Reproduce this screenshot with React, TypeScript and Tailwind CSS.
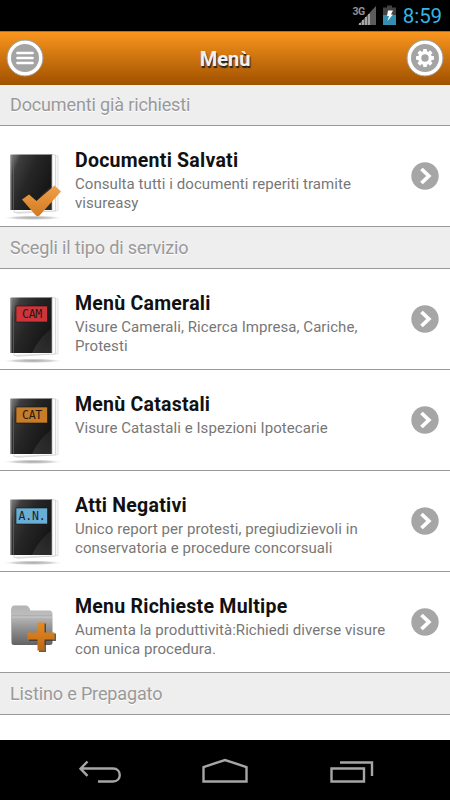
import type { ReactNode } from "react"

const Book = ({ id, children }: { id: string, children?: ReactNode }) => (
  <svg width="70" height="80" viewBox="0 0 70 80" className="block">
    <defs>
      <linearGradient id={`${id}-cover`} x1="0" y1="0" x2="1" y2="0.6">
        <stop offset="0" stopColor="#8a8a8a" />
        <stop offset="0.2" stopColor="#3d3d3d" />
        <stop offset="0.5" stopColor="#262626" />
        <stop offset="1" stopColor="#141414" />
      </linearGradient>
      <linearGradient id={`${id}-shine`} x1="0" y1="0" x2="0" y2="1">
        <stop offset="0" stopColor="#fff" stopOpacity="0" />
        <stop offset="1" stopColor="#fff" stopOpacity="0.26" />
      </linearGradient>
      <radialGradient id={`${id}-shadow`}>
        <stop offset="0" stopColor="#a8a8a8" />
        <stop offset="0.6" stopColor="#d2d2d2" />
        <stop offset="1" stopColor="#fff" stopOpacity="0" />
      </radialGradient>
    </defs>
    <ellipse cx="33" cy="72.8" rx="31" ry="2.4" fill={`url(#${id}-shadow)`} />
    <path d="M51 10L58 11V65.5L17 68.5V66L51 65z" fill="#f7f7f7" stroke="#dcdcdc" strokeWidth="0.8" />
    <path d="M51 9.5L55.5 10V66L14 67.5V65z" fill="#fcfcfc" stroke="#c9c9c9" strokeWidth="0.7" />
    <path d="M10.5 9.5H52V65H10.5z" fill={`url(#${id}-cover)`} />
    <path d="M51 14V41C43 47 36 56 32 65H51z" fill={`url(#${id}-shine)`} opacity="0.4" />
    <path d="M11 10V65" stroke="#8c8c8c" strokeWidth="1" />
    <path d="M13.5 10V65" stroke="#666" strokeWidth="0.7" />
    <path d="M51.8 10V65" stroke="#888" strokeWidth="0.8" />
    {children}
  </svg>
)

const Label = ({ text, fill }: { text: string, fill: string }) => (
  <g>
    <path d="M16 18H47.5V34H16z" fill={fill} stroke="#1a1412" strokeWidth="0.6" />
    <text x="32" y="30.3" textAnchor="middle" fill="#241b18" className="font-['DejaVu_Sans_Mono',monospace] text-[11.5px] tracking-[-0.2px]">
      {text}
    </text>
  </g>
)

const Folder = () => (
  <svg width="70" height="80" viewBox="0 0 70 80" className="block">
    <defs>
      <linearGradient id="folder" x1="0" y1="0" x2="0" y2="1">
        <stop offset="0" stopColor="#b4b4b4" />
        <stop offset="0.25" stopColor="#bdbdbd" />
        <stop offset="0.6" stopColor="#8f8f8f" />
        <stop offset="1" stopColor="#626262" />
      </linearGradient>
      <linearGradient id="plus" x1="0" y1="0" x2="0" y2="1">
        <stop offset="0" stopColor="#e58a24" />
        <stop offset="1" stopColor="#bf6812" />
      </linearGradient>
    </defs>
    <path d="M11 19Q11.5 14.5 14 14.5H26Q28.5 14.5 30.5 19.5H50Q52.5 20 52.5 23V52Q52.5 54 50 54H14Q11.5 54 11.5 52z" fill="url(#folder)" />
    <path d="M11.5 25H52" stroke="#a2a2a2" strokeWidth="1" />
    <path d="M12 26H52" stroke="#cbcbcb" strokeWidth="1" />
    <path d="M38.5 32.5H46V42.5H56V50H46V61H39V50H29V42.5H38.5z" fill="#3d352e" opacity="0.8" />
    <path d="M37.5 31.5H44.5V41.5H54.5V48.5H44.5V59.5H37.5V48.5H27.5V41.5H37.5z" fill="url(#plus)" />
  </svg>
)

const Check = () => (
  <g>
    <defs>
      <linearGradient id="check" x1="0" y1="0" x2="0" y2="1">
        <stop offset="0" stopColor="#f0a04b" />
        <stop offset="1" stopColor="#d17a20" />
      </linearGradient>
    </defs>
    <path d="M22 54.5L29 49.5L36.5 56L54.5 40.5L61 46.5L39.5 70.5Q37 72.5 35 69.5z" fill="url(#check)" />
  </g>
)

const SectionTitle = ({ title, className }: { title: string, className: string }) => (
  <div className={`flex items-center border-b border-[#999] bg-[#eee] pl-[10px] text-[18px] leading-[24px] tracking-[-0.14px] text-[#999] [text-shadow:0_1px_0_#fff] ${className}`}>
    {title}
  </div>
)

const Item = ({ icon, title, desc }: { icon: ReactNode, title: string, desc: ReactNode }) => (
  <div className="flex h-[101px] border-b border-[#999] bg-white">
    <div className="w-[75px] shrink-0 pt-[19px]">{icon}</div>
    <div className="grow pt-[23px]">
      <h3 className="text-[19.5px] leading-[24px] font-bold tracking-[0.24px] whitespace-nowrap text-[#111]">{title}</h3>
      <p className="mt-[1.5px] text-[15px] leading-[19px] tracking-[0.06px] whitespace-nowrap text-[#777]">{desc}</p>
    </div>
    <svg width="28" height="28" viewBox="0 0 28 28" className="mt-[36px] mr-[11px] shrink-0">
      <circle cx="14" cy="14" r="13.7" fill="#a6a6a6" />
      <path d="M10.5 7L17.8 14L10.5 21" fill="none" stroke="#fff" strokeWidth="3.8" />
    </svg>
  </div>
)

const teeth = [0, 45, 90, 135, 180, 225, 270, 315]

export default function App() {
  return (
    <main className="flex h-[800px] w-[450px] flex-col overflow-hidden bg-white font-['Roboto',sans-serif]">
      {/* Status bar */}
      <div className="flex h-[31px] shrink-0 items-center justify-end bg-black">
        <svg width="48" height="31" viewBox="0 0 48 31">
          <text x="1.5" y="14.5" fill="#929292" className="text-[10.5px] font-bold tracking-[-0.5px]">3G</text>
          <path d="M7 25L25 6V25z" fill="#5c5c5c" />
          <path d="M9 25V23M12 25V20M15 25V17M18 25V14" stroke="#a5a5a5" strokeWidth="2" />
          <path d="M32 7.5H36V5.5H41V7.5H45V25H32z" fill="#424242" />
          <path d="M32 15H45V25H32z" fill="#338eb0" />
          <path d="M37 10.5L42 10.5L40 14.5H42L36.5 21L38 16H36z" fill="#fff" />
        </svg>
        <span className="mr-[8px] ml-[4px] pt-[2px] text-[20.5px] leading-[29px] tracking-[-0.1px] text-[#33b5e5]">8:59</span>
      </div>

      {/* Header */}
      <header className="flex h-[54px] shrink-0 items-center justify-between border-t border-[#c66c0d] bg-linear-to-b from-[#fa961e] to-[#a05100] px-[6px]">
        <svg width="38" height="38" viewBox="0 0 38 38" className="-mt-[2px]">
          <circle cx="19" cy="19" r="18" fill="#fff" stroke="#999" strokeWidth="1" />
          <circle cx="19" cy="19" r="14" fill="#a4a4a4" />
          <path d="M11.5 14H26.5M11.5 19H26.5M11.5 24H26.5" stroke="#fff" strokeWidth="2.7" strokeLinecap="round" />
        </svg>
        <h1 className="text-[20px] leading-[24px] font-bold text-[#f0f0f0] [text-shadow:1px_2px_1px_#222]">Menù</h1>
        <svg width="38" height="38" viewBox="0 0 38 38" className="-mt-[2px]">
          <circle cx="19" cy="19" r="18" fill="#fff" stroke="#999" strokeWidth="1" />
          <circle cx="19" cy="19" r="14" fill="#a4a4a4" />
          {teeth.map((angle) => (
            <rect key={angle} x="17.1" y="10" width="3.8" height="4" rx="0.8" fill="#fff" transform={`rotate(${angle} 19 19)`} />
          ))}
          <circle cx="19" cy="19" r="5.3" fill="none" stroke="#fff" strokeWidth="3.2" />
        </svg>
      </header>

      {/* Menu list */}
      <div className="grow overflow-hidden">
        <SectionTitle title="Documenti già richiesti" className="h-[41px]" />
        <Item icon={<Book id="saved"><Check /></Book>} title="Documenti Salvati" desc={<>Consulta tutti i documenti reperiti tramite<br />visureasy</>} />
        <SectionTitle title="Scegli il tipo di servizio" className="h-[42px]" />
        <Item icon={<Book id="cam"><Label text="CAM" fill="#cf343b" /></Book>} title="Menù Camerali" desc={<>Visure Camerali, Ricerca Impresa, Cariche,<br />Protesti</>} />
        <Item icon={<Book id="cat"><Label text="CAT" fill="#c77d27" /></Book>} title="Menù Catastali" desc="Visure Catastali e Ispezioni Ipotecarie" />
        <Item icon={<Book id="neg"><Label text="A.N." fill="#68aed5" /></Book>} title="Atti Negativi" desc={<>Unico report per protesti, pregiudizievoli in<br />conservatoria e procedure concorsuali</>} />
        <Item icon={<Folder />} title="Menu Richieste Multipe" desc={<>Aumenta la produttività:Richiedi diverse visure<br />con unica procedura.</>} />
        <SectionTitle title="Listino e Prepagato" className="h-[42px]" />
      </div>

      {/* Navigation bar */}
      <nav className="flex h-[60px] shrink-0 justify-center bg-black">
        <svg width="330" height="60" viewBox="0 0 330 60" fill="none" stroke="#a6a6a6" strokeWidth="2.4">
          <path d="M27.5 21.5L20.5 28.7L27.5 35.9M21 28.5H53C62 28.5 62 41.5 53 41.5H38" />
          <path d="M143.5 41.5V27L165 20L186.5 27V41.5z" />
          <path d="M271.5 28.5H304V41.5H271.5zM280 22.5H312V36" />
        </svg>
      </nav>
    </main>
  )
}
